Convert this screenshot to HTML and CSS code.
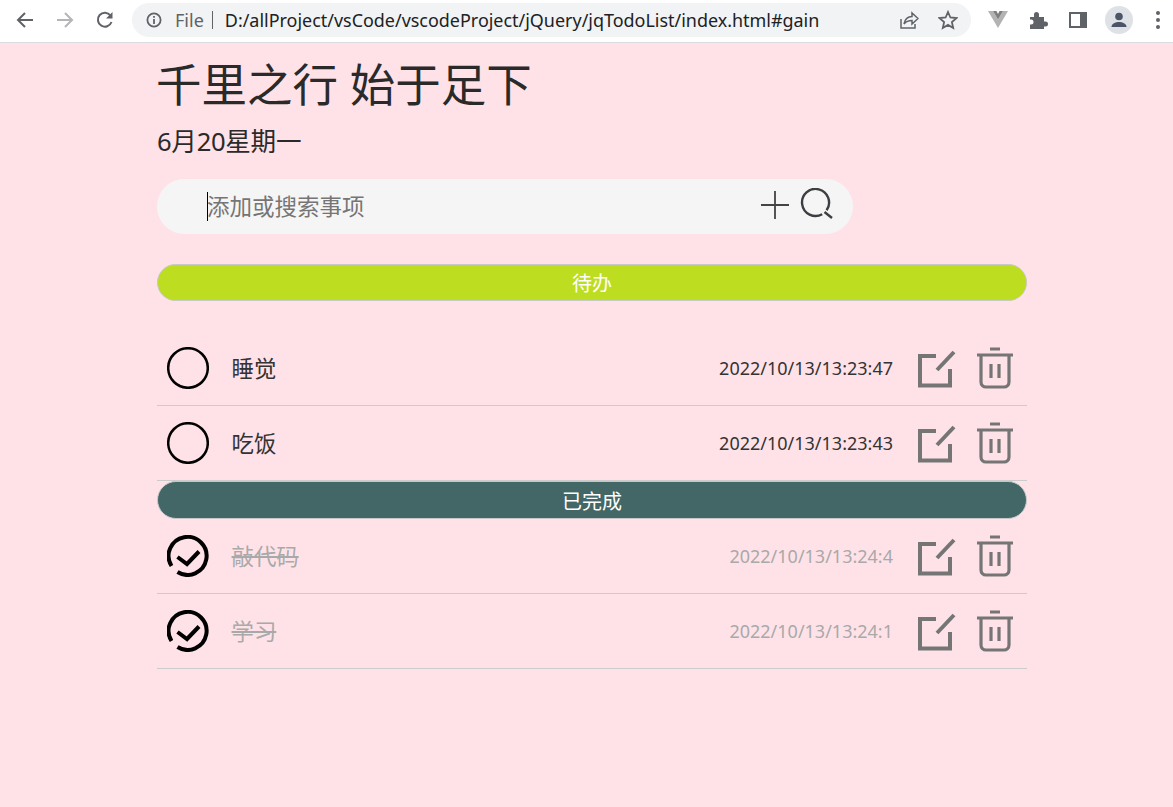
FILE: index.html
```html
<!DOCTYPE html>
<html lang="zh">
<head>
<meta charset="utf-8">
<title>jqTodoList</title>
<link rel="stylesheet" href="styles.css">
</head>
<body>
<header class="chrome">
  <svg class="tb-icon back" viewBox="0 0 20 20"><path d="M18 10H3M10 3l-7 7 7 7"/></svg>
  <svg class="tb-icon fwd" viewBox="0 0 20 20"><path d="M2 10h15M10 3l7 7-7 7"/></svg>
  <svg class="tb-icon reload" viewBox="0 0 20 20"><path d="M16.500 12a7 7 0 1 1-1-6.500"/><path class="fill" d="M17.500 2v6.500H11z"/></svg>
  <div class="omnibox">
    <svg class="info" viewBox="0 0 16 16"><circle cx="8" cy="8" r="6.600"/><path d="M8 7v5M8 4v1.800"/></svg>
    <span class="scheme">File</span>
    <span class="sep"></span>
    <span class="url">D:/allProject/vsCode/vscodeProject/jQuery/jqTodoList/index.html#gain</span>
    <svg class="omni-icon share" viewBox="0 0 20 20"><path d="M2 9v9h14v-4"/><path d="M5 14c1-5 4-7.500 8-7.500V3l6 5.500-6 5.500v-3.500c-3.500 0-6 1-8 3.500z"/></svg>
    <svg class="omni-icon star" viewBox="0 0 20 20"><path d="M10 2l2.400 5.500 6 .6-4.500 4 1.300 5.900-5.200-3.100-5.200 3.100 1.300-5.900-4.500-4 6-.6z"/></svg>
  </div>
  <svg class="ext vue" viewBox="0 0 20 17"><path class="v1" d="M0 0h5l5 8.500L15 0h5L10 17z"/><path class="v2" d="M5 0h3.500L10 3l1.500-3H15l-5 8.500z"/></svg>
  <svg class="ext puzzle" viewBox="0 0 20 20"><path d="M2 7h4V4.500a2.500 2.500 0 0 1 5 0V7h5v4.500h1.500a2.500 2.500 0 0 1 0 5H16V19H2v-4.500h1a2.500 2.500 0 0 0 0-5H2z"/></svg>
  <svg class="ext panel" viewBox="0 0 20 20"><path d="M1 2h18v16H1z"/><path class="hole" d="M3 4h9v12H3z"/></svg>
  <span class="avatar"><svg viewBox="0 0 20 20"><circle cx="10" cy="6.500" r="3.800"/><path d="M2.500 17c0-3.500 4-5 7.500-5s7.500 1.500 7.500 5z"/></svg></span>
  <span class="menu"><i></i><i></i><i></i></span>
</header>

<main class="app">
  <h1 class="title">千里之行 始于足下</h1>
  <p class="date">6月20星期一</p>

  <div class="search">
    <span class="caret"></span>
    <input class="search-input" type="text" placeholder="添加或搜索事项">
    <svg class="plus" viewBox="0 0 30 30"><path d="M1 15h28M15 1v28"/></svg>
    <svg class="glass" viewBox="0 0 34 34"><path d="M22.200 26.200A13.500 13.500 0 1 1 26.600 22.200"/><path d="M24.500 24l7.500 6"/></svg>
  </div>

  <h2 class="band band-todo">待办</h2>
  <ul class="list list-todo">
    <li class="row">
      <svg class="check" viewBox="0 0 42 42"><circle cx="21" cy="21" r="19.800"/></svg>
      <span class="name">睡觉</span>
      <time class="stamp">2022/10/13/13:23:47</time>
      <svg class="edit" viewBox="0 0 40 40"><path d="M20 8H4v29.500h30V21"/><path d="M21 22L38 4"/></svg>
      <svg class="trash" viewBox="0 0 40 42"><path d="M2 8h36M15 2h10M6 8v27a5 5 0 0 0 5 5h18a5 5 0 0 0 5-5V8M16 17v14M24 17v14"/></svg>
    </li>
    <li class="row">
      <svg class="check" viewBox="0 0 42 42"><circle cx="21" cy="21" r="19.800"/></svg>
      <span class="name">吃饭</span>
      <time class="stamp">2022/10/13/13:23:43</time>
      <svg class="edit" viewBox="0 0 40 40"><path d="M20 8H4v29.500h30V21"/><path d="M21 22L38 4"/></svg>
      <svg class="trash" viewBox="0 0 40 42"><path d="M2 8h36M15 2h10M6 8v27a5 5 0 0 0 5 5h18a5 5 0 0 0 5-5V8M16 17v14M24 17v14"/></svg>
    </li>
  </ul>

  <h2 class="band band-done">已完成</h2>
  <ul class="list">
    <li class="row done">
      <svg class="check checked" viewBox="0 0 42 42"><path d="M4.500 31A19 19 0 1 1 10.500 37"/><path d="M10.500 22l9.500 7L32 16.500"/></svg>
      <span class="name">敲代码</span>
      <time class="stamp">2022/10/13/13:24:4</time>
      <svg class="edit" viewBox="0 0 40 40"><path d="M20 8H4v29.500h30V21"/><path d="M21 22L38 4"/></svg>
      <svg class="trash" viewBox="0 0 40 42"><path d="M2 8h36M15 2h10M6 8v27a5 5 0 0 0 5 5h18a5 5 0 0 0 5-5V8M16 17v14M24 17v14"/></svg>
    </li>
    <li class="row done">
      <svg class="check checked" viewBox="0 0 42 42"><path d="M4.500 31A19 19 0 1 1 10.500 37"/><path d="M10.500 22l9.500 7L32 16.500"/></svg>
      <span class="name">学习</span>
      <time class="stamp">2022/10/13/13:24:1</time>
      <svg class="edit" viewBox="0 0 40 40"><path d="M20 8H4v29.500h30V21"/><path d="M21 22L38 4"/></svg>
      <svg class="trash" viewBox="0 0 40 42"><path d="M2 8h36M15 2h10M6 8v27a5 5 0 0 0 5 5h18a5 5 0 0 0 5-5V8M16 17v14M24 17v14"/></svg>
    </li>
  </ul>
</main>
</body>
</html>
```

FILE: styles.css
```css
* { box-sizing: border-box; }
html, body { margin: 0; padding: 0; }
body {
  min-height: 807px;
  background: #ffe2e8;
  color: #333;
  font-family: "Noto Sans", "Noto Sans CJK SC", sans-serif;
  overflow: hidden;
}

/* browser toolbar */
.chrome {
  display: flex;
  align-items: center;
  height: 43px;
  padding: 0 0 3px 15px;
  background: #fff;
  border-bottom: 1px solid #dadce0;
}
.tb-icon { width: 20px; height: 20px; fill: none; stroke: #5f6368; stroke-width: 2; flex: none; }
.tb-icon .fill { fill: #5f6368; stroke: none; }
.fwd { margin-left: 20px; stroke: #b3b5b8; }
.reload { margin-left: 20px; }
.omnibox {
  display: flex;
  align-items: center;
  width: 839px;
  height: 34px;
  margin-left: 17px;
  padding-left: 14px;
  background: #f1f3f4;
  border-radius: 17px;
  flex: none;
}
.info { width: 16px; height: 16px; fill: none; stroke: #5f6368; stroke-width: 1.800; flex: none; }
.scheme { margin-left: 13px; font-size: 18px; color: #5f6368; }
.sep { width: 1px; height: 18px; margin-left: 8px; background: #5f6368; }
.url { width: 674px; margin-left: 12px; font-size: 17.950px; color: #202124; white-space: nowrap; }
.omni-icon { width: 20px; height: 20px; fill: none; stroke: #5f6368; stroke-width: 1.500; flex: none; }
.star { margin-left: 19px; stroke-width: 1.800; }
.ext { flex: none; }
.vue { width: 20px; height: 17px; margin-left: 17px; }
.v1 { fill: #b3b3b3; }
.v2 { fill: #7f7f7f; }
.puzzle { width: 20px; height: 20px; margin-left: 20px; fill: #5f6368; }
.panel { width: 20px; height: 20px; margin-left: 20px; fill: #5f6368; }
.panel .hole { fill: #fff; }
.avatar {
  display: flex;
  align-items: flex-end;
  justify-content: center;
  width: 28px;
  height: 28px;
  margin-left: 17px;
  padding-bottom: 4px;
  border-radius: 50%;
  background: #dee1e6;
  flex: none;
}
.avatar svg { width: 20px; height: 20px; fill: #4a5568; }
.menu { display: flex; flex-direction: column; gap: 3px; margin-left: 23px; flex: none; }
.menu i { display: block; width: 4px; height: 4px; border-radius: 50%; background: #5f6368; }

/* app */
.app { width: 870px; margin-left: 157px; }
.title {
  margin: 8px 0 0 -1px;
  color: #2a2a2a;
  font-size: 45.500px;
  font-weight: 400;
  line-height: 67px;
}
.date {
  margin: 5px 0 0;
  color: #2a2a2a;
  font-size: 25.600px;
  line-height: 38px;
  letter-spacing: -0.300px;
}
.search {
  display: flex;
  align-items: center;
  width: 696px;
  height: 55px;
  margin-top: 18px;
  padding-left: 50px;
  border-radius: 28px;
  background: #f5f5f5;
}
.caret { width: 1px; height: 29px; margin-right: -1px; background: #000; flex: none; }
.search-input {
  flex: 1;
  min-width: 0;
  height: 100%;
  padding: 0;
  border: 0;
  outline: 0;
  background: transparent;
  font: inherit;
  font-size: 22.500px;
}
.search-input::placeholder { color: #757575; opacity: 1; }
.plus { width: 30px; height: 30px; fill: none; stroke: #444; stroke-width: 1.800; margin: -3px 0 0 0; flex: none; }
.glass { width: 34px; height: 34px; fill: none; stroke: #3c3f42; stroke-width: 2.400; margin: -3px 19px 0 10px; flex: none; }

.band {
  margin: 0;
  border: 1px solid #c8c8c8;
  border-radius: 19px;
  color: #fff;
  font-size: 20px;
  font-weight: 400;
  line-height: 37px;
  text-align: center;
}
.band-todo { height: 37px; margin-top: 30px; background: #bddd21; }
.band-done { height: 38px; line-height: 39px; background: #436666; }

.list { margin: 0; padding: 0; list-style: none; }
.list-todo { margin-top: 30px; }
.row {
  display: flex;
  align-items: center;
  height: 75px;
  padding: 0 12px 0 10px;
  border-bottom: 1px solid #cccccc;
}
.check { width: 42px; height: 42px; fill: none; stroke: #000; stroke-width: 2.500; flex: none; }
.checked { stroke-width: 4; }
.name { margin: 0 0 2px 22.500px; font-size: 22.400px; }
.stamp { margin-left: auto; font-size: 18px; }
.edit { width: 40px; height: 40px; margin-left: 23px; fill: none; stroke: #757575; stroke-width: 4; flex: none; }
.trash { width: 40px; height: 42px; margin-left: 19px; fill: none; stroke: #757575; stroke-width: 3.200; flex: none; }
.done .name { color: #a9a9a9; text-decoration: line-through; }
.done .stamp { color: #a9a9a9; }
```
